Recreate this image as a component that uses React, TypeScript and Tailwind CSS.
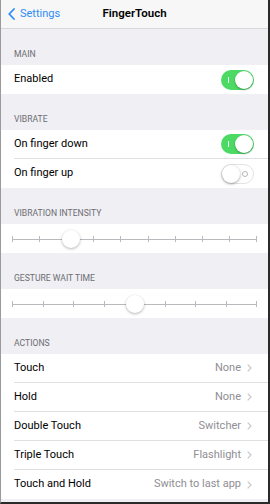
import React from "react";

const font = { fontFamily: "Roboto, 'Liberation Sans', sans-serif" };

function Toggle({ on }: { on: boolean }) {
  if (on) {
    return (
      <div className="relative w-[33px] h-[20px] rounded-full bg-[#4cd964] shrink-0">
        <div className="absolute left-[7px] top-[7px] w-px h-[6px] bg-white/90" />
        <div className="absolute right-[1px] top-[1px] w-[18px] h-[18px] rounded-full bg-white shadow-[0_1px_2px_rgba(0,0,0,0.3)]" />
      </div>
    );
  }
  return (
    <div className="relative w-[33px] h-[20px] rounded-full bg-white border border-[#e3e3e6] shrink-0">
      <div className="absolute right-[5px] top-[6px] w-[6px] h-[6px] rounded-full border border-[#b8b8bd]" />
      <div className="absolute left-0 top-0 w-[18px] h-[18px] rounded-full bg-white shadow-[0_1px_3px_rgba(0,0,0,0.35)]" />
    </div>
  );
}

function Header({ text }: { text: string }) {
  return (
    <div className="h-[36px] shrink-0 flex items-end pl-[13px] pb-[6px] text-[8.6px] leading-none text-[#6d6d72]">
      {text}
    </div>
  );
}

function Row({ label, right, last }: { label: string; right?: React.ReactNode; last?: boolean }) {
  return (
    <div className="bg-white pl-[13px] shrink-0">
      <div className={`h-[29px] flex items-center pr-[14px] ${last ? "" : "border-b border-[#e0e0e4]"}`}>
        <span className="flex-1 text-[11px] text-black">{label}</span>
        {right}
      </div>
    </div>
  );
}

function Value({ text }: { text: string }) {
  return (
    <div className="flex items-center gap-[6px] pr-[2px]">
      <span className="text-[11px] text-[#8e8e93]">{text}</span>
      <svg width="5" height="8" viewBox="0 0 5 8">
        <path d="M0.7 0.7 L4 4 L0.7 7.3" fill="none" stroke="#c7c7cc" strokeWidth="1.2" />
      </svg>
    </div>
  );
}

function Slider({ ticks, thumb }: { ticks: number; thumb: number }) {
  return (
    <div className="bg-white h-[29px] shrink-0 px-[11px] flex items-center">
      <div className="relative flex-1 h-[6px]">
        <div className="absolute left-0 right-0 top-[3px] h-px bg-[#b9b9be]" />
        <div className="absolute inset-0 flex justify-between">
          {Array.from({ length: ticks }).map((_, i) => (
            <div key={i} className="w-px h-[6px] bg-[#b9b9be]" />
          ))}
        </div>
        <div
          className="absolute top-[-6px] w-[18px] h-[18px] rounded-full bg-white shadow-[0_1px_3px_rgba(0,0,0,0.3)]"
          style={{ left: `calc(${thumb * 100}% - 9px)` }}
        />
      </div>
    </div>
  );
}

export default function App() {
  return (
    <div style={font} className="w-[270px] h-[504px] overflow-hidden bg-[#efeff4] border-l border-l-[#9a9a9a] border-r-2 border-r-[#2a2a2a] border-b-2 border-b-[#2a2a2a] flex flex-col">
      <div className="h-[29px] shrink-0 bg-[#f7f7f8] border-b border-[#d8d8dc] relative flex items-center justify-center">
        <div className="absolute left-[7px] top-0 h-full flex items-center gap-[5px] text-[#2f8bf6]">
          <svg width="7" height="12" viewBox="0 0 7 12">
            <path d="M6 1 L1.2 6 L6 11" fill="none" stroke="#2f8bf6" strokeWidth="1.8" strokeLinecap="round" strokeLinejoin="round" />
          </svg>
          <span className="text-[11px]">Settings</span>
        </div>
        <span className="text-[11.5px] font-semibold text-black">FingerTouch</span>
      </div>

      <Header text="MAIN" />
      <Row label="Enabled" right={<Toggle on />} last />

      <Header text="VIBRATE" />
      <Row label="On finger down" right={<Toggle on />} />
      <Row label="On finger up" right={<Toggle on={false} />} last />

      <Header text="VIBRATION INTENSITY" />
      <Slider ticks={10} thumb={0.239} />

      <Header text="GESTURE WAIT TIME" />
      <Slider ticks={9} thumb={0.5} />

      <Header text="ACTIONS" />
      <Row label="Touch" right={<Value text="None" />} />
      <Row label="Hold" right={<Value text="None" />} />
      <Row label="Double Touch" right={<Value text="Switcher" />} />
      <Row label="Triple Touch" right={<Value text="Flashlight" />} />
      <Row label="Touch and Hold" right={<Value text="Switch to last app" />} last />
    </div>
  );
}
